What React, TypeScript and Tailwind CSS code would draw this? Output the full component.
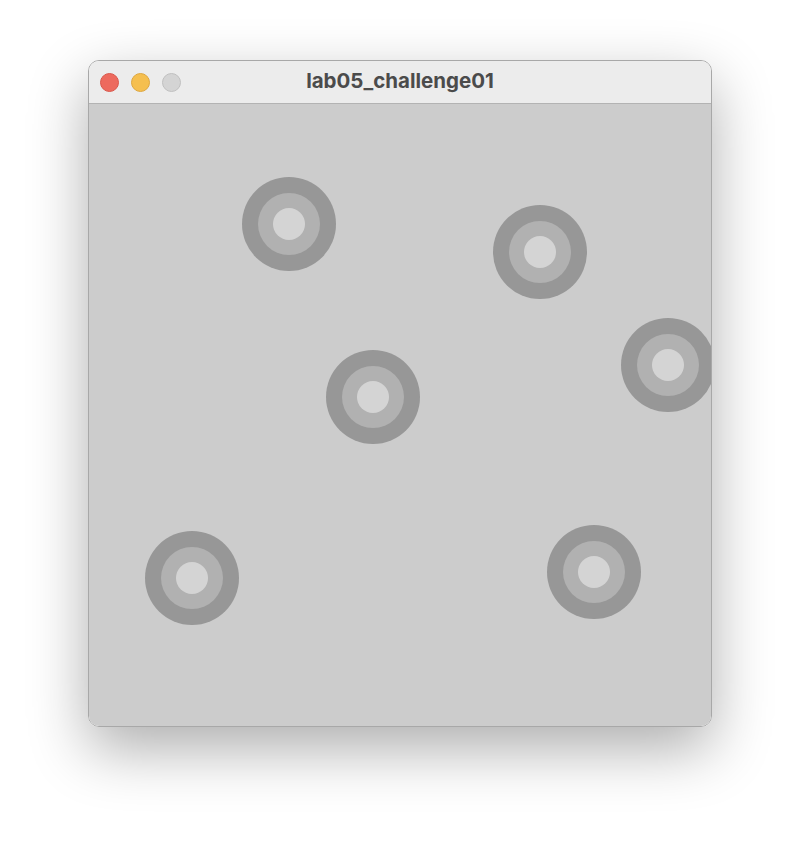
const rings = [
  { x: 200, y: 120 },
  { x: 451, y: 148 },
  { x: 579, y: 261 },
  { x: 284, y: 293 },
  { x: 103, y: 474 },
  { x: 505, y: 468 },
];

function Ring({ x, y }: { x: number; y: number }) {
  // centred on (x, y) in canvas coordinates
  return (
    <div
      className="absolute flex h-[94px] w-[94px] items-center justify-center rounded-full bg-[#979797]"
      style={{ left: x - 47, top: y - 47 }}
    >
      <div className="flex h-[62px] w-[62px] items-center justify-center rounded-full bg-[#b1b1b1]">
        <div className="h-[32px] w-[32px] rounded-full bg-[#d4d4d4]" />
      </div>
    </div>
  );
}

export default function App() {
  return (
    <div className="h-[844px] w-[800px] bg-white pl-[88px] pt-[60px]">
      <div className="flex h-[667px] w-[624px] flex-col overflow-hidden rounded-[11px] border border-[#a8a8a8] shadow-[0_22px_60px_rgba(0,0,0,0.32)]">
        <div className="relative flex h-[43px] shrink-0 items-center border-b border-[#b3b3b3] bg-[#ececec]">
          <div className="flex items-center gap-[12px] pl-[11px]">
            <span className="h-[19px] w-[19px] rounded-full border border-[#d9574b] bg-[#ed6a5e]" />
            <span className="h-[19px] w-[19px] rounded-full border border-[#dea73f] bg-[#f5bf4f]" />
            <span className="h-[19px] w-[19px] rounded-full border border-[#c0c0c0] bg-[#d4d4d4]" />
          </div>
          <div className="absolute inset-0 flex items-center justify-center pb-[1px] font-['Inter',sans-serif] text-[20.5px] font-bold text-[#4b4b4b]">
            lab05_challenge01
          </div>
        </div>
        <div className="relative flex-1 overflow-hidden bg-[#cccccc]">
          {rings.map((r, i) => (
            <Ring key={i} x={r.x} y={r.y} />
          ))}
        </div>
      </div>
    </div>
  );
}
